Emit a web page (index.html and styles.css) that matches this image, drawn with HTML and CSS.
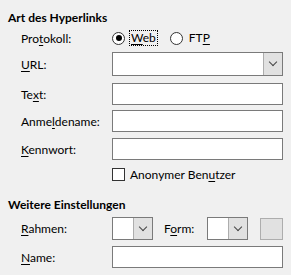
FILE: index.html
```html
<!doctype html>
<html lang="de">
  <head>
    <meta charset="UTF-8" />
    <title>Hyperlink</title>
    <link rel="stylesheet" href="styles.css">
  </head>
  <body>
    <div class="dialog">
      <!-- Art des Hyperlinks -->
      <section class="group">
        <h2 class="group-title">Art des Hyperlinks</h2>

        <div class="row row-protocol">
          <span class="label">Pro<u>t</u>okoll:</span>
          <div class="radios">
            <span class="radio is-checked"></span>
            <span class="radio-text is-focused"><u>W</u>eb</span>
            <span class="radio"></span>
            <span class="radio-text">FT<u>P</u></span>
          </div>
        </div>

        <div class="row row-url">
          <span class="label"><u>U</u>RL:</span>
          <div class="combo combo-wide">
            <span class="combo-field"></span>
            <span class="combo-button"><span class="chevron"></span></span>
          </div>
        </div>

        <div class="row row-text">
          <span class="label">Te<u>x</u>t:</span>
          <span class="field"></span>
        </div>

        <div class="row row-login">
          <span class="label">Anme<u>l</u>dename:</span>
          <span class="field"></span>
        </div>

        <div class="row row-password">
          <span class="label"><u>K</u>ennwort:</span>
          <span class="field"></span>
        </div>

        <div class="row row-check">
          <span class="label"></span>
          <span class="checkbox"></span>
          <span class="check-text">Anonymer Ben<u>u</u>tzer</span>
        </div>
      </section>

      <!-- Weitere Einstellungen -->
      <section class="group">
        <h2 class="group-title group-title-second">Weitere Einstellungen</h2>

        <div class="row row-frame">
          <span class="label"><u>R</u>ahmen:</span>
          <div class="combo combo-small">
            <span class="combo-field"></span>
            <span class="combo-button"><span class="chevron"></span></span>
          </div>
          <span class="form-label">F<u>o</u>rm:</span>
          <div class="combo combo-small">
            <span class="combo-field"></span>
            <span class="combo-button"><span class="chevron"></span></span>
          </div>
          <span class="square-button"></span>
        </div>

        <div class="row row-name">
          <span class="label"><u>N</u>ame:</span>
          <span class="field"></span>
        </div>
      </section>
    </div>
  </body>
</html>
```

FILE: styles.css
```css
body {
  margin: 0;
  background-color: #f0f0f0;
  font-family: Lato, "Noto Sans", sans-serif;
  font-size: 12px;
  color: #000;
}

.dialog {
  width: 291px;
  height: 275px;
  padding: 0 8px;
  box-sizing: border-box;
}

.group-title {
  margin: 10px 0 0;
  font-size: 12px;
  font-weight: bold;
  line-height: 16px;
}

.group-title-second {
  margin-top: 15px;
}

u {
  text-decoration-thickness: 1px;
  text-underline-offset: 2px;
}

.row {
  display: flex;
  align-items: center;
  padding-left: 13px;
}

.label {
  width: 91px;
  flex-shrink: 0;
}

/* radio buttons */
.row-protocol {
  height: 16px;
  margin-top: 4px;
}

.radios {
  display: flex;
  align-items: center;
}

.radio {
  width: 11px;
  height: 11px;
  border: 1px solid #333;
  border-radius: 50%;
  background-color: #fff;
  position: relative;
}

.radio.is-checked::after {
  content: "";
  position: absolute;
  left: 2.5px;
  top: 2.5px;
  width: 6px;
  height: 6px;
  border-radius: 50%;
  background-color: #000;
}

.radio-text {
  margin-left: 4px;
  margin-right: 12px;
  padding: 0 1px;
  line-height: 14px;
  border: 1px solid transparent;
}

.radio-text.is-focused {
  border: 1px dotted #000;
}

/* inputs */
.field {
  display: block;
  width: 172px;
  height: 22px;
  box-sizing: border-box;
  border: 1px solid #7a7a7a;
  background-color: #fff;
}

.combo {
  display: flex;
  box-sizing: border-box;
  border: 1px solid #7a7a7a;
  background-color: #fff;
}

.combo-wide {
  width: 172px;
  height: 24px;
}

.combo-small {
  width: 41px;
  height: 23px;
}

.combo-field {
  flex: 1;
}

.combo-button {
  width: 18px;
  display: flex;
  align-items: center;
  justify-content: center;
  background-color: #e1e1e1;
  border-left: 1px solid #adadad;
}

.chevron {
  width: 5px;
  height: 5px;
  border-right: 1px solid #444;
  border-bottom: 1px solid #444;
  transform: translateY(-2px) rotate(45deg);
}

.row-url {
  margin-top: 6px;
}

.row-text {
  margin-top: 7px;
}

.row-login {
  margin-top: 5px;
}

.row-password {
  margin-top: 6px;
}

/* checkbox */
.row-check {
  height: 16px;
  margin-top: 6px;
}

.checkbox {
  width: 13px;
  height: 13px;
  box-sizing: border-box;
  border: 1px solid #333;
  background-color: #fff;
}

.check-text {
  margin-left: 5px;
}

/* second group */
.row-frame {
  margin-top: 4px;
}

.form-label {
  margin-left: 11px;
  width: 43px;
}

.square-button {
  width: 23px;
  height: 22px;
  margin-left: 12px;
  box-sizing: border-box;
  border: 1px solid #adadad;
  background-color: #e1e1e1;
}

.row-name {
  margin-top: 6px;
}
```
